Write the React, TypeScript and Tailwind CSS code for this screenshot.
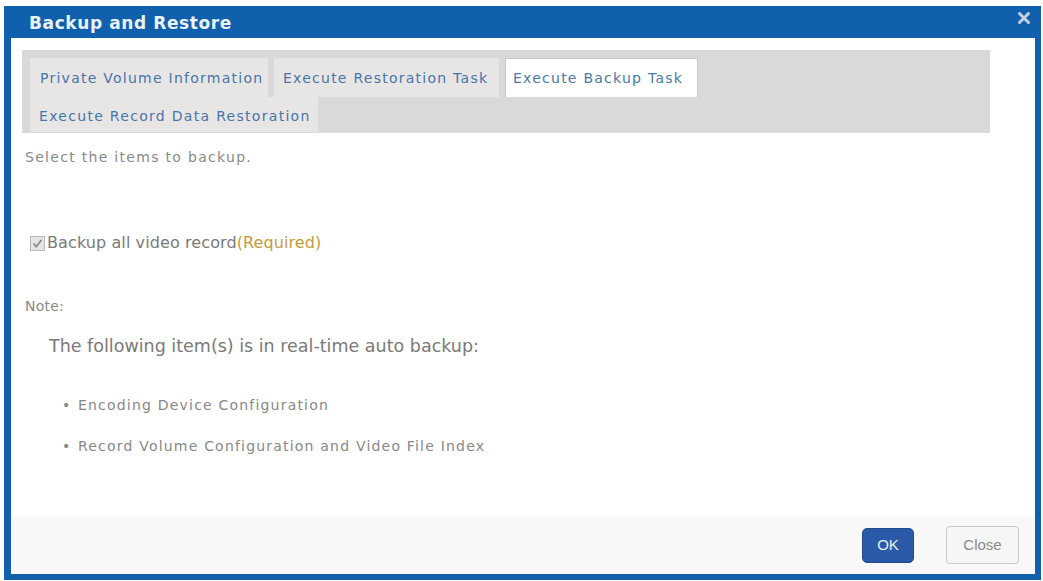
import React from "react";

const font = { fontFamily: '"DejaVu Sans", Verdana, sans-serif' };

export default function App() {
  return (
    <div className="w-[1043px] h-[581px] bg-white pl-[4px] pt-[6px]" style={font}>
      <div className="w-[1037px] h-[574px] bg-[#1160ad] flex flex-col">
        {/* Title bar */}
        <div className="h-[32px] flex items-center justify-between pl-[25px] pr-[10px]">
          <span className="text-[17px] leading-[22px] font-bold text-[#eaf2fa] tracking-[0.6px] mt-[2px]">Backup and Restore</span>
          <svg width="14" height="14" viewBox="0 0 14 14" className="mt-[-8px]">
            <path d="M2.5 2.5 L11.5 11.5 M11.5 2.5 L2.5 11.5" stroke="#c3d1e3" strokeWidth="3" strokeLinecap="round" />
          </svg>
        </div>
        {/* Body */}
        <div className="flex-1 ml-[7px] mr-[6px] mb-[6px] bg-white flex flex-col">
          <div className="flex-1 flex flex-col pl-[11px]">
            {/* Tab strip */}
            <div className="mt-[12px] w-[968px] h-[83px] bg-[#d9d9d9] pl-[8px] pt-[8px] flex flex-col">
              <div className="flex gap-[6px] h-[39px] text-[14px] leading-[18px] tracking-[1.25px] text-[#4675ac]">
                <div className="w-[238px] bg-[#e8e6e4] flex items-center pl-[10px]">Private Volume Information</div>
                <div className="w-[225px] bg-[#e8e6e4] flex items-center pl-[9px]">Execute Restoration Task</div>
                <div className="w-[193px] bg-white border border-[#c8c8c8] border-b-0 flex items-center pl-[7px] text-[#4a7aa6]">Execute Backup Task</div>
              </div>
              <div className="flex h-[35px] text-[14px] leading-[18px] tracking-[1.3px] text-[#4675ac]">
                <div className="w-[288px] bg-[#e8e6e4] flex items-center pl-[9px] pt-[3px]">Execute Record Data Restoration</div>
              </div>
            </div>
            <div className="pl-[3px]">
              <div className="mt-[15px] text-[14px] leading-[18px] text-[#8a8a8a] tracking-[1.3px]">Select the items to backup.</div>
              <div className="mt-[65px] h-[24px] flex items-center">
                <div className="ml-[5px] w-[15px] h-[15px] border border-[#b8b8b8] bg-[#e4e4e4] flex items-center justify-center">
                  <svg width="11" height="11" viewBox="0 0 11 11">
                    <path d="M1.5 5.5 L4.2 8.5 L9.5 2" stroke="#8d8d8d" strokeWidth="1.8" fill="none" />
                  </svg>
                </div>
                <span className="ml-[2px] text-[16px] leading-[24px] text-[#7a7a7a] tracking-[0.1px]">
                  Backup all video record<span className="text-[#c49a3a]">(Required)</span>
                </span>
              </div>
              <div className="mt-[42px] text-[14px] leading-[18px] text-[#8a8a8a] tracking-[0.2px]">Note:</div>
              <div className="mt-[19px] ml-[24px] text-[17.5px] leading-[24px] text-[#7a7a7a]">The following item(s) is in real-time auto backup:</div>
              <div className="mt-[37px] ml-[37px] h-[20px] flex items-center text-[14px] leading-[20px] text-[#888] tracking-[1.2px]">
                <span className="w-[16px]">•</span>
                <span>Encoding Device Configuration</span>
              </div>
              <div className="mt-[21px] ml-[37px] h-[20px] flex items-center text-[14px] leading-[20px] text-[#888] tracking-[1.2px]">
                <span className="w-[16px]">•</span>
                <span>Record Volume Configuration and Video File Index</span>
              </div>
            </div>
          </div>
          {/* Footer */}
          <div className="h-[58px] bg-[#f9f8f8] flex items-center justify-end pr-[16px] gap-[32px]">
            <button className="w-[52px] h-[35px] rounded-[5px] bg-[#2b5ba8] border border-[#1f4a8e] text-[15px] text-[#e8eef8]" style={{ fontFamily: '"Liberation Sans", Arial, sans-serif' }}>OK</button>
            <button className="w-[73px] h-[38px] rounded-[4px] bg-[#f6f6f6] border border-[#c9c9c9] text-[15px] text-[#8a8a8a]" style={{ fontFamily: '"Liberation Sans", Arial, sans-serif' }}>Close</button>
          </div>
        </div>
      </div>
    </div>
  );
}
